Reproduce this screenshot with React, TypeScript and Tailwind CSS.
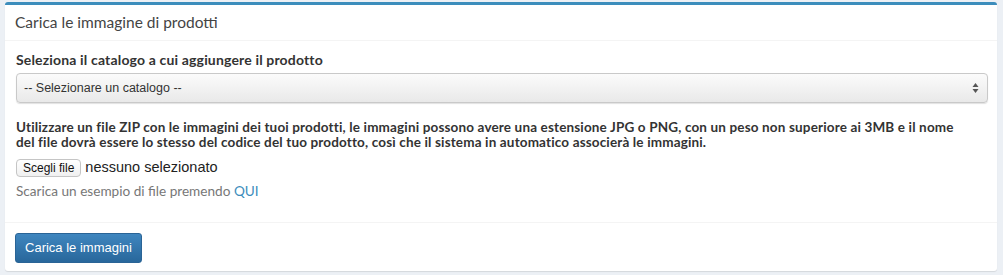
import React from "react";

export default function App() {
  const ss = { fontFamily: '"Source Sans Pro", Lato, "Liberation Sans", sans-serif' };
  const arial = { fontFamily: '"Liberation Sans", Arial, Helvetica, sans-serif' };
  return (
    <div className="w-[1003px] h-[275px] bg-[#ecf0f5] pl-[5px] pr-[6px] pt-[2px] overflow-hidden" style={ss}>
      <div className="bg-white border-t-[3px] border-[#3c8dbc] rounded-[3px] shadow-[0_1px_1px_rgba(0,0,0,0.1)] h-[269px] flex flex-col">
        <div className="h-[36px] border-b border-[#f4f4f4] flex items-center px-[10px]">
          <h3 className="text-[15.5px] text-[#444] leading-none">Carica le immagine di prodotti</h3>
        </div>
        <div className="px-[11px] pt-[9px] flex-1">
          <label className="block font-bold text-[14px] tracking-[0.16px] text-[#333] leading-[20px] mb-[3px]">
            Seleziona il catalogo a cui aggiungere il prodotto
          </label>
          <div className="h-[30px] mr-[-2px] rounded-[4px] border border-[#c9c9c9] bg-gradient-to-b from-[#fbfbfb] to-[#e9e9e9] shadow-[0_1px_1px_rgba(0,0,0,0.12)] flex items-center justify-between pl-[7px] pr-[8px]">
            <span className="text-[12.5px] text-[#333]" style={arial}>
              -- Selezionare un catalogo --
            </span>
            <svg width="7" height="12" viewBox="0 0 7 12">
              <path d="M3.5 1 L6.5 5 L0.5 5 Z" fill="#555" />
              <path d="M3.5 11 L6.5 7 L0.5 7 Z" fill="#555" />
            </svg>
          </div>
          <p className="mt-[17px] font-bold text-[13.5px] tracking-[0.15px] text-[#333] leading-[15px]">
            Utilizzare un file ZIP con le immagini dei tuoi prodotti, le immagini possono avere una estensione JPG o PNG, con un peso non superiore ai 3MB e il nome
            <br />
            del file dovrà essere lo stesso del codice del tuo prodotto, così che il sistema in automatico associerà le immagini.
          </p>
          <div className="mt-[9px] flex items-center h-[18px]" style={arial}>
            <span className="h-[18px] px-[6px] border border-[#c5c5c5] rounded-[4px] bg-gradient-to-b from-white to-[#f0f0f0] text-[12px] text-[#111] leading-[16px]">
              Scegli file
            </span>
            <span className="ml-[4px] text-[14.5px] text-[#222]">nessuno selezionato</span>
          </div>
          <p className="mt-[4px] text-[13.6px] text-[#777] leading-[20px]">
            Scarica un esempio di file premendo <span className="text-[#3c8dbc]">QUI</span>
          </p>
        </div>
        <div className="border-t border-[#f4f4f4] h-[49px] px-[10px] pt-[10px]">
          <button
            className="w-[127px] h-[30px] rounded-[3px] bg-gradient-to-b from-[#3f86bf] to-[#28679b] border border-[#2a6496] text-white text-[13px]"
            style={arial}
          >
            Carica le immagini
          </button>
        </div>
      </div>
    </div>
  );
}
